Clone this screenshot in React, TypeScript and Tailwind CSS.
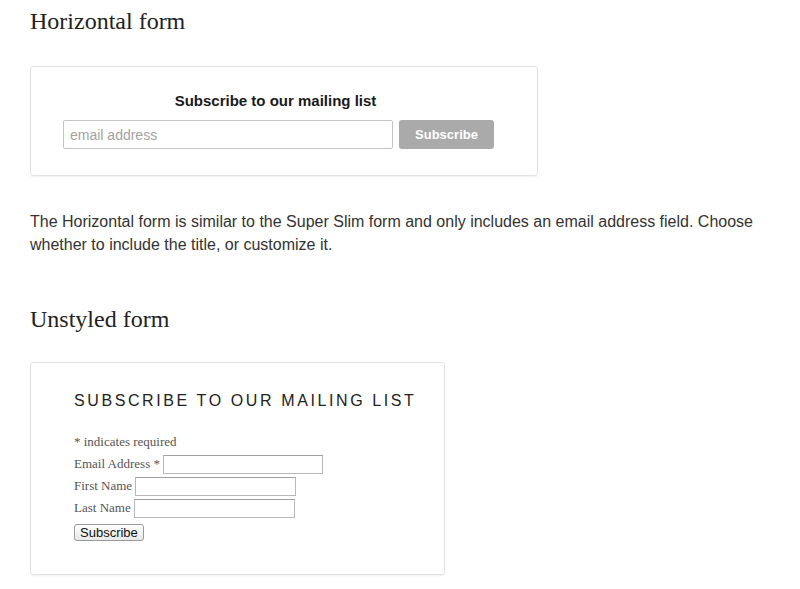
import React from 'react';

const serif = "font-['Liberation_Serif',_serif]";
const sans = "font-['Liberation_Sans',_Arial,_sans-serif]";

const UnstyledRow: React.FC<{ label: string; width: string }> = ({ label, width }) => (
  <div className="flex h-[22px] items-center">
    <span className={`${serif} text-[13px] text-[#555]`}>{label}</span>
    <input
      type="text"
      className={`ml-[3px] h-[19px] ${width} border border-[#b8b8b8] border-t-[#a0a0a0] bg-white outline-none`}
    />
  </div>
);

const App: React.FC = () => {
  return (
    <div className="min-h-[589px] w-[800px] bg-white pl-[30px] pt-[6px] text-[#222]">
      <h2 className={`${serif} text-[24px] leading-[30px] text-[#222]`}>Horizontal form</h2>

      {/* Horizontal form */}
      <div className="mt-[30px] h-[110px] w-[508px] rounded-[3px] border border-[#e2e2e2] shadow-[0_1px_2px_rgba(0,0,0,0.06)]">
        <div className="ml-[32px] w-[431px] pt-[24px]">
          <div className={`${sans} pr-[6px] text-center text-[15px] font-bold leading-[20px] text-[#1a1a1a]`}>
            Subscribe to our mailing list
          </div>
          <div className="mt-[9px] flex items-start">
            <input
              type="text"
              placeholder="email address"
              className={`${sans} h-[29px] w-[330px] rounded-[2px] border border-[#c4c4c4] px-[6px] text-[14px] text-[#333] outline-none placeholder:text-[#a3a3a3]`}
            />
            <button
              className={`${sans} ml-[6px] h-[29px] w-[95px] rounded-[3px] bg-[#aaaaaa] text-[13px] font-bold text-white`}
            >
              Subscribe
            </button>
          </div>
        </div>
      </div>

      <p className={`${sans} mt-[34px] w-[740px] text-[16px] leading-[23px] text-[#333]`}>
        The Horizontal form is similar to the Super Slim form and only includes an email address field. Choose
        whether to include the title, or customize it.
      </p>

      <h2 className={`${serif} mt-[48px] text-[24px] leading-[30px] text-[#222]`}>Unstyled form</h2>

      {/* Unstyled form */}
      <div className="mt-[28px] h-[213px] w-[415px] rounded-[3px] border border-[#e2e2e2] pl-[43px] pt-[28px] shadow-[0_1px_2px_rgba(0,0,0,0.06)]">
        <div className={`${sans} text-[16px] leading-[20px] tracking-[2.6px] text-[#222]`}>
          SUBSCRIBE TO OUR MAILING LIST
        </div>
        <div className={`${serif} mt-[23px] text-[13px] leading-[15px] text-[#555]`}>* indicates required</div>
        <div className="mt-[4px]">
          <UnstyledRow label="Email Address *" width="w-[160px]" />
          <UnstyledRow label="First Name" width="w-[161px]" />
          <UnstyledRow label="Last Name" width="w-[161px]" />
        </div>
        <button
          className={`${sans} mt-[3px] h-[17px] rounded-[3px] border border-[#9a9a9a] bg-gradient-to-b from-white to-[#e8e8e8] px-[5px] text-[13px] leading-[15px] text-[#111]`}
        >
          Subscribe
        </button>
      </div>
    </div>
  );
};

export default App;
